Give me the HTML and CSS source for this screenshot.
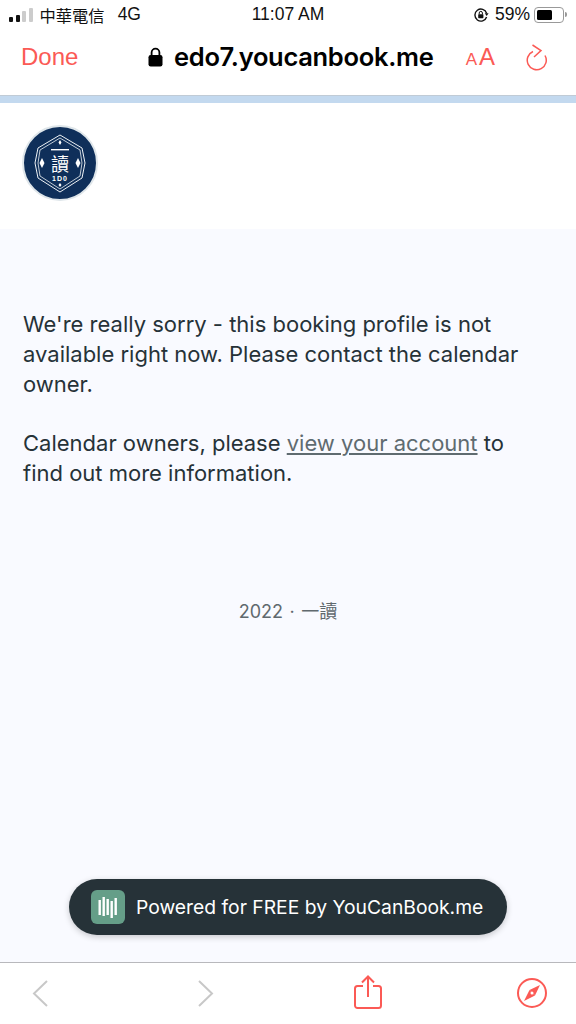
FILE: index.html
```html
<!DOCTYPE html>
<html lang="en">
<head>
  <meta charset="UTF-8" />
  <meta name="viewport" content="width=device-width, initial-scale=1.0" />
  <title>edo7.youcanbook.me</title>
  <link rel="stylesheet" href="styles.css">
</head>
<body>
  <!-- status bar -->
  <div class="status-bar">
    <div class="status-left">
      <span class="signal"><i class="on"></i><i class="on"></i><i></i><i></i></span>
      <span class="carrier">中華電信</span>
      <span class="network">4G</span>
    </div>
    <div class="status-time">11:07 AM</div>
    <div class="status-right">
      <svg class="rotation-lock" width="16" height="16" viewBox="0 0 16 16">
        <path d="M13.6 6.2A6 6 0 1 0 13.600 10" fill="none" stroke="#111" stroke-width="1.400"/>
        <path d="M11.800 6.200h3.800L13.700 9z" fill="#111"/>
        <rect x="5.200" y="7.200" width="5.200" height="4" rx="0.600" fill="#111"/>
        <path d="M6.200 7.400V6a1.600 1.600 0 0 1 3.200 0v1.400" fill="none" stroke="#111" stroke-width="1"/>
      </svg>
      <span class="battery-text">59%</span>
      <span class="battery"><span class="battery-level"></span></span>
      <span class="battery-cap"></span>
    </div>
  </div>

  <!-- browser nav -->
  <div class="nav-bar">
    <span class="done">Done</span>
    <div class="address">
      <svg width="15" height="20" viewBox="0 0 15 20">
        <rect x="0.500" y="8" width="14" height="11.500" rx="2.200" fill="#000"/>
        <path d="M3.600 9V5.600a3.900 3.900 0 0 1 7.800 0V9" fill="none" stroke="#000" stroke-width="1.800"/>
      </svg>
      <span>edo7.youcanbook.me</span>
    </div>
    <span class="text-size"><small>A</small>A</span>
    <svg class="reload" width="24" height="28" viewBox="0 0 24 28">
      <path d="M8 8.500A9.500 9.500 0 1 0 20 12.500" fill="none" stroke="#fb5a55" stroke-width="1.500"/>
      <path d="M7.500 2L16 7.500L9 14" fill="none" stroke="#fb5a55" stroke-width="1.500"/>
    </svg>
  </div>
  <div class="progress"></div>

  <!-- page -->
  <header class="brand">
    <svg class="logo" width="76" height="76" viewBox="0 0 76 76">
      <circle cx="38" cy="38" r="37" fill="#0f2f5a" stroke="#dfe6ea" stroke-width="2"/>
      <path d="M38 10L60 23L63 38L60 53L38 67L16 53L13 38L16 23Z" fill="none" stroke="#eef2f5" stroke-width="1"/>
      <path d="M38 13L58 25L60 38L58 51L38 64L18 51L16 38L18 25Z" fill="none" stroke="#eef2f5" stroke-width="0.800"/>
      <path d="M20 33l2.500 5l-2.500 5l-2.500-5zM56 33l2.500 5l-2.500 5l-2.500-5zM38 15l1.500 2.500l-1.500 2.500l-1.500-2.500zM38 58l1.500 2l-1.500 2l-1.500-2z" fill="#fff"/>
      <rect x="29" y="24" width="18" height="1.400" fill="#fff"/>
      <text x="38" y="46" class="logo-char">讀</text>
      <text x="38" y="56" class="logo-sub">1D0</text>
    </svg>
  </header>

  <main class="content">
    <p>We're really sorry - this booking profile is not available right now. Please contact the calendar owner.</p>
    <p>Calendar owners, please <a href="#">view your account</a> to find out more information.</p>
    <div class="foot-note">2022 · 一讀</div>
    <div class="powered">
      <svg width="34" height="34" viewBox="0 0 34 34">
        <rect width="34" height="34" rx="6" fill="#659e88"/>
        <g fill="#fff">
          <rect x="7.500" y="10" width="2.400" height="15"/>
          <rect x="11.500" y="7" width="2.400" height="19"/>
          <rect x="15.500" y="9" width="2.400" height="16"/>
          <rect x="19.500" y="11" width="2.400" height="17"/>
          <rect x="23.500" y="8" width="2.400" height="17"/>
        </g>
      </svg>
      <span>Powered for FREE by YouCanBook.me</span>
    </div>
  </main>

  <!-- bottom toolbar -->
  <nav class="toolbar">
    <svg class="tool-back" width="16" height="27" viewBox="0 0 16 27"><path d="M15 1L2 13.500L15 26" fill="none" stroke="#c8c8c8" stroke-width="2"/></svg>
    <svg class="tool-forward" width="16" height="27" viewBox="0 0 16 27"><path d="M1 1L14 13.500L1 26" fill="none" stroke="#c8c8c8" stroke-width="2"/></svg>
    <svg class="tool-share" width="28" height="34" viewBox="0 0 28 34">
      <path d="M9 11H3.500A2.500 2.500 0 0 0 1 13.500V30.500A2.500 2.500 0 0 0 3.500 33H24.500A2.500 2.500 0 0 0 27 30.500V13.500A2.500 2.500 0 0 0 24.500 11H19" fill="none" stroke="#fb5a55" stroke-width="2"/>
      <path d="M14 22V2M8 7.500L14 1.500L20 7.500" fill="none" stroke="#fb5a55" stroke-width="2"/>
    </svg>
    <svg class="tool-compass" width="32" height="32" viewBox="0 0 32 32">
      <circle cx="16" cy="16" r="14" fill="none" stroke="#fb5a55" stroke-width="2"/>
      <path d="M24 8L19 18.500L13.500 13Z" fill="#fb5a55"/>
      <path d="M8 24L13.500 13L19 18.500Z" fill="#fb5a55"/>
      <circle cx="16" cy="16" r="1.500" fill="#fff"/>
    </svg>
  </nav>
</body>
</html>
```

FILE: styles.css
```css
* {
  box-sizing: border-box;
}

body {
  margin: 0;
  height: 1024px;
  display: flex;
  flex-direction: column;
  font-family: Inter, 'Noto Sans CJK TC', sans-serif;
  background-color: #fff;
  color: #263238;
  overflow: hidden;
}

.status-bar {
  height: 29px;
  display: grid;
  grid-template-columns: 1fr auto 1fr;
  align-items: center;
  padding: 0 9px;
  font-family: 'Liberation Sans', 'Noto Sans CJK TC', sans-serif;
  font-size: 17.500px;
  color: #111;
}

.status-left {
  display: flex;
  align-items: center;
}

.signal {
  display: flex;
  align-items: flex-end;
  gap: 2.500px;
  height: 14px;
  margin-right: 7px;
}

.signal i {
  width: 4px;
  background: #ccc;
  border-radius: 1px;
}

.signal i:nth-child(1) { height: 5px; }
.signal i:nth-child(2) { height: 7px; }
.signal i:nth-child(3) { height: 11px; }
.signal i:nth-child(4) { height: 14px; }
.signal i.on { background: #111; }

.carrier {
  font-size: 16.300px;
}

.network {
  margin-left: 13px;
}

.status-right {
  display: flex;
  align-items: center;
  justify-content: flex-end;
}

.rotation-lock {
  margin-right: 6px;
}

.battery-text {
  margin-right: 4px;
}

.battery {
  width: 30px;
  height: 16px;
  border: 1px solid #999;
  border-radius: 4px;
  padding: 2px;
}

.battery-level {
  display: block;
  width: 15px;
  height: 100%;
  background: #000;
  border-radius: 1.500px;
}

.battery-cap {
  width: 2px;
  height: 5px;
  background: #999;
  margin-left: 1px;
  border-radius: 0 2px 2px 0;
}

.nav-bar {
  height: 66px;
  display: flex;
  align-items: center;
  padding: 0 27px 11px 21px;
  color: #fb5a55;
}

.done {
  font-family: 'Liberation Sans', sans-serif;
  font-size: 24px;
  width: 127px;
}

.address {
  display: flex;
  align-items: center;
  gap: 11px;
  color: #000;
  font-family: Inter, sans-serif;
  font-weight: 600;
  font-size: 25.500px;
  letter-spacing: -0.300px;
}

.text-size {
  margin-left: auto;
  font-family: 'Liberation Sans', sans-serif;
  font-size: 24px;
  margin-right: 30px;
}

.text-size small {
  font-size: 17px;
  margin-right: 2px;
}

.progress {
  height: 8px;
  background: #c3d9ef;
  border-top: 1px solid #c0cbd6;
}

.brand {
  height: 126px;
  padding: 22px 22px 0;
  background: #fff;
}

.logo {
  display: block;
}

.logo-char {
  font-family: 'Noto Sans CJK TC', sans-serif;
  font-size: 18px;
  fill: #fff;
  text-anchor: middle;
}

.logo-sub {
  font-family: 'Liberation Sans', sans-serif;
  font-size: 7px;
  font-weight: bold;
  letter-spacing: 1px;
  fill: #fff;
  text-anchor: middle;
}

.content {
  flex: 1;
  position: relative;
  background: #f9faff;
  padding: 80px 40px 0 23px;
  font-size: 22px;
  line-height: 30px;
}

.content p {
  margin: 0 0 29px;
}

.content a {
  color: #5f6b70;
}

.foot-note {
  margin-top: 109px;
  margin-right: -17px;
  text-align: center;
  font-size: 18px;
  word-spacing: 1.500px;
  color: #60696e;
}

.powered {
  position: absolute;
  left: 69px;
  bottom: 27px;
  width: 438px;
  height: 56px;
  display: flex;
  align-items: center;
  gap: 11px;
  padding-left: 22px;
  background: #263238;
  border-radius: 28px;
  box-shadow: 0 2px 6px rgba(0,0,0,0.2);
  color: #fff;
  font-size: 19.300px;
}

.toolbar {
  height: 62px;
  border-top: 1px solid #b8b8bc;
  background: #fff;
  display: flex;
  align-items: center;
}

.tool-back {
  margin-left: 32px;
}

.tool-forward {
  margin-left: 150px;
}

.tool-share {
  margin: 0 0 3px 140px;
}

.tool-compass {
  margin: 0 0 1px 134px;
}
```
